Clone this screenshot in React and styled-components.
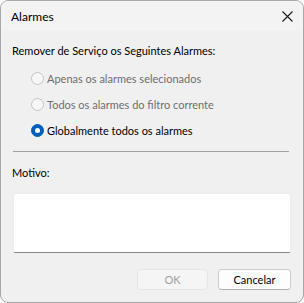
import React from "react";
import styled, { createGlobalStyle } from "styled-components";

const Global = createGlobalStyle`
  html, body { margin: 0; padding: 0; background: #ffffff; }
  body { font-family: Lato, "Noto Sans", sans-serif; }
  * { box-sizing: border-box; }
`;

const Window = styled.div`
  width: 304px;
  height: 303px;
  border: 1px solid #a8a8a8;
  border-radius: 8px;
  overflow: hidden;
  display: flex;
  flex-direction: column;
  background: #f0f0f0;
  font-size: 11px;
  color: #000;
`;

const TitleBar = styled.div`
  height: 30px;
  flex: none;
  display: flex;
  align-items: center;
  justify-content: space-between;
  padding: 0 9px 0 10px;
  background: #f3f3f3;
  font-size: 12px;
`;

const CloseBtn = styled.div`
  width: 14px;
  height: 14px;
  display: flex;
  align-items: center;
  justify-content: center;
`;

const Body = styled.div`
  flex: 1;
  display: flex;
  flex-direction: column;
  padding: 12px 12px 12px 11px;
`;

const Label = styled.div`
  line-height: 16px;
  height: 16px;
  white-space: nowrap;
`;

const RadioGroup = styled.div`
  display: flex;
  flex-direction: column;
  margin-top: 6px;
  padding-left: 19px;
`;

const RadioRow = styled.div`
  height: 26px;
  display: flex;
  align-items: center;
  gap: 3px;
  color: ${(p) => (p.$disabled ? "#6e6e6e" : "#000")};
  white-space: nowrap;
`;

const Circle = styled.span`
  width: 13px;
  height: 13px;
  border-radius: 50%;
  flex: none;
  border: 1px solid ${(p) => (p.$checked ? "#005fb8" : "#c4c4c4")};
  background: ${(p) => (p.$checked ? "#005fb8" : "#f6f6f6")};
  display: flex;
  align-items: center;
  justify-content: center;
  &::after {
    content: "";
    display: ${(p) => (p.$checked ? "block" : "none")};
    width: 5px;
    height: 5px;
    border-radius: 50%;
    background: #fff;
  }
`;

const Separator = styled.div`
  height: 1px;
  background: #a0a0a0;
  margin: 8px 2px 0 1px;
`;

const Motivo = styled(Label)`
  margin-top: 13px;
`;

const TextArea = styled.div`
  margin: 12px 0 0 1px;
  height: 60px;
  background: #fff;
  border: 1px solid #ececec;
  border-bottom: 1px solid #868686;
  border-radius: 2px;
`;

const Buttons = styled.div`
  margin-top: auto;
  display: flex;
  justify-content: flex-end;
  gap: 10px;
`;

const Button = styled.div`
  width: ${(p) => (p.$w ? p.$w : 72)}px;
  height: 21px;
  border-radius: 4px;
  display: flex;
  align-items: center;
  justify-content: center;
  border: 1px solid ${(p) => (p.$disabled ? "#e5e5e5" : "#cccccc")};
  border-bottom-color: ${(p) => (p.$disabled ? "#e5e5e5" : "#b0b0b0")};
  background: ${(p) => (p.$disabled ? "#f5f5f5" : "#fdfdfd")};
  color: ${(p) => (p.$disabled ? "#a0a0a0" : "#000")};
`;

const options = [
  { text: "Apenas os alarmes selecionados", disabled: true },
  { text: "Todos os alarmes do filtro corrente", disabled: true },
  { text: "Globalmente todos os alarmes", checked: true },
];

export default function App() {
  return (
    <>
      <Global />
      <Window>
        <TitleBar>
          <span>Alarmes</span>
          <CloseBtn>
            <svg width="11" height="11" viewBox="0 0 11 11">
              <path d="M0.5 0.5 L10.5 10.5 M10.5 0.5 L0.5 10.5" stroke="#1a1a1a" strokeWidth="1.1" />
            </svg>
          </CloseBtn>
        </TitleBar>
        <Body>
          <Label>Remover de Serviço os Seguintes Alarmes:</Label>
          <RadioGroup>
            {options.map((o) => (
              <RadioRow key={o.text} $disabled={o.disabled}>
                <Circle $checked={o.checked} />
                <span>{o.text}</span>
              </RadioRow>
            ))}
          </RadioGroup>
          <Separator />
          <Motivo>Motivo:</Motivo>
          <TextArea />
          <Buttons>
            <Button $disabled $w={71}>OK</Button>
            <Button $w={73}>Cancelar</Button>
          </Buttons>
        </Body>
      </Window>
    </>
  );
}
